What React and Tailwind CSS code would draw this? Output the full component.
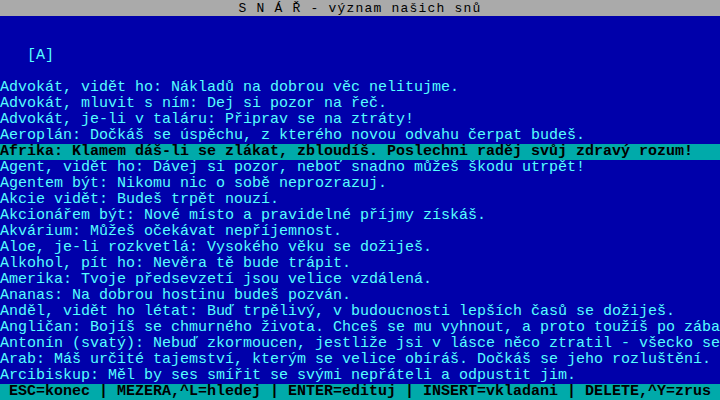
const lines = [
  "Advokát, vidět ho: Nákladů na dobrou věc nelitujme.",
  "Advokát, mluvit s ním: Dej si pozor na řeč.",
  "Advokát, je-li v taláru: Připrav se na ztráty!",
  "Aeroplán: Dočkáš se úspěchu, z kterého novou odvahu čerpat budeš.",
  "Afrika: Klamem dáš-li se zlákat, zbloudíš. Poslechni raděj svůj zdravý rozum!",
  "Agent, vidět ho: Dávej si pozor, neboť snadno můžeš škodu utrpět!",
  "Agentem být: Nikomu nic o sobě neprozrazuj.",
  "Akcie vidět: Budeš trpět nouzí.",
  "Akcionářem být: Nové místo a pravidelné příjmy získáš.",
  "Akvárium: Můžeš očekávat nepříjemnost.",
  "Aloe, je-li rozkvetlá: Vysokého věku se dožiješ.",
  "Alkohol, pít ho: Nevěra tě bude trápit.",
  "Amerika: Tvoje předsevzetí jsou velice vzdálená.",
  "Ananas: Na dobrou hostinu budeš pozván.",
  "Anděl, vidět ho létat: Buď trpělivý, v budoucnosti lepších časů se dožiješ.",
  "Angličan: Bojíš se chmurného života. Chceš se mu vyhnout, a proto toužíš po zába",
  "Antonín (svatý): Nebuď zkormoucen, jestliže jsi v lásce něco ztratil - všecko se",
  "Arab: Máš určité tajemství, kterým se velice obíráš. Dočkáš se jeho rozluštění.",
  "Arcibiskup: Měl by ses smířit se svými nepřáteli a odpustit jim.",
];

const selected = 4;

const keys = [
  "ESC=konec",
  "MEZERA,^L=hledej",
  "ENTER=edituj",
  "INSERT=vkladani",
  "DELETE,^Y=zrus",
];

export default function App() {
  return (
    <div className="w-[720px] h-[400px] overflow-hidden bg-[#0000aa] text-[#55ffff] font-['Liberation_Mono',monospace] text-[15px] leading-[16px]">
      {/* title */}
      <div className="h-4 bg-[#aaaaaa] text-black whitespace-pre text-center text-[13px] leading-[17px] tracking-[1.2px] overflow-hidden">
        S N Á Ř - význam našich snů
      </div>
      <div className="h-8"></div>
      <div className="h-4 whitespace-pre">   [A]</div>
      <div className="h-4"></div>

      {lines.map((line, i) => (
        <div
          key={i}
          className={
            i === selected
              ? "h-4 whitespace-pre bg-[#00aaaa] text-black font-bold"
              : "h-4 whitespace-pre"
          }
        >
          {line.slice(0, 80)}
        </div>
      ))}

      {/* status bar */}
      <div className="h-4 bg-[#00aaaa] text-black font-bold whitespace-pre">
        {" " + keys.join(" | ")}
      </div>
    </div>
  );
}
